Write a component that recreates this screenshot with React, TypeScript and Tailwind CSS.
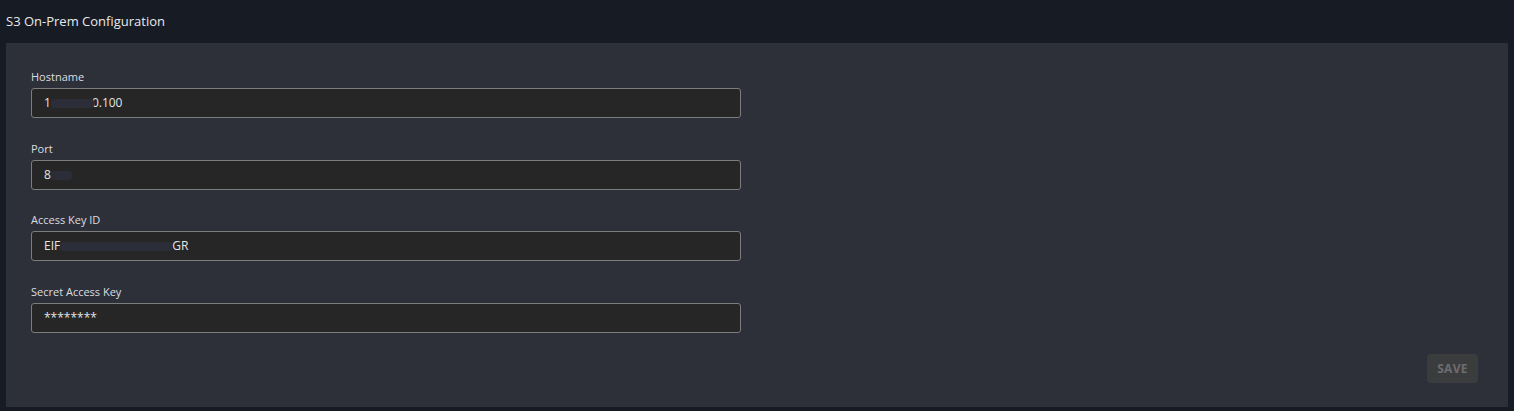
import React from 'react';

const Redact: React.FC<{ w: string }> = ({ w }) => (
  <span className={`inline-block h-[9px] ${w} bg-[#2b2e38] rounded-[3px] align-middle blur-[0.5px]`}></span>
);

const Field: React.FC<{ label: string; gap?: string; children: React.ReactNode }> = ({ label, gap, children }) => (
  <div className={gap ?? ''}>
    <div className="text-[11px] leading-4 text-[#dcdde0] mb-[3px] pt-[1px]">{label}</div>
    <div className="w-[710px] h-[30px] bg-[#262626] border border-[#7c7c7c] rounded-[3px] px-[12px] flex items-center text-[12px] text-[#e4e4e4] whitespace-pre">
      {children}
    </div>
  </div>
);

const App: React.FC = () => {
  return (
    <div className="w-[1514px] h-[411px] bg-[#171b24] font-['Open_Sans',sans-serif] overflow-hidden">
      <div className="h-[43px] flex items-center pl-[6px] text-[13px] text-[#e8e9eb]">S3 On-Prem Configuration</div>

      <div className="mx-[6px] h-[364px] bg-[#2d3039] pt-[25px] pl-[25px] pr-[30px] flex flex-col">
        <Field label="Hostname">
          <span>1</span>
          <Redact w="w-[43px]" />
          <span className="-ml-[2px]">0.100</span>
        </Field>
        <Field label="Port" gap="mt-[22px]">
          <span>8</span>
          <Redact w="w-[21px]" />
        </Field>
        <Field label="Access Key ID" gap="mt-[21px]">
          <span>EIF</span>
          <Redact w="w-[112px]" />
          <span>GR</span>
        </Field>
        <Field label="Secret Access Key" gap="mt-[22px]">
          <span>********</span>
        </Field>

        <div className="flex justify-end mt-[21px]">
          <button className="w-[51px] h-[29px] rounded-[4px] bg-[#3b3c3e] text-[12px] font-bold text-[#6c6d70] tracking-[0.3px]">
            SAVE
          </button>
        </div>
      </div>
    </div>
  );
};

export default App;
